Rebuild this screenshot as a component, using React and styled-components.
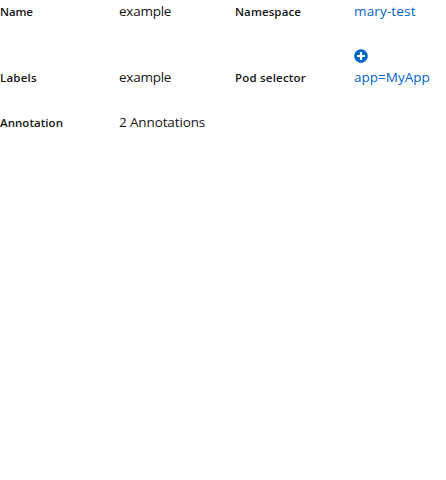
import React from "react";
import styled, { createGlobalStyle } from "styled-components";
import { FaPlusCircle } from "react-icons/fa";

const GlobalStyle = createGlobalStyle`
  body {
    margin: 0;
    background: #fff;
    color: #151515;
    font-family: "Open Sans", "Noto Sans", sans-serif;
    font-size: 14px;
    line-height: 21px;
  }
`;

const DescriptionList = styled.dl`
  display: grid;
  grid-template-columns: 211px 211px;
  gap: 24px;
  margin: 0;
  padding-top: 1px;
`;

const Group = styled.div`
  display: grid;
  grid-template-columns: 95px auto;
  column-gap: 24px;
  align-items: end;
`;

const Term = styled.dt`
  font-size: 11.5px;
  font-weight: 600;
  line-height: 20px;
  white-space: nowrap;
  letter-spacing: ${(p) => p.$tracking || 0}px;
`;

const Description = styled.dd`
  margin: 0;
  font-size: 13.5px;
  white-space: nowrap;
  letter-spacing: ${(p) => p.$tracking || 0}px;
`;

const Link = styled.a`
  color: #06c;
  text-decoration: none;
`;

const PlusIcon = styled(FaPlusCircle)`
  display: block;
  width: 14px;
  height: 14px;
  margin: 3px 0 4px;
`;

export default function App() {
  return (
    <>
      <GlobalStyle />
      <DescriptionList>
        <Group>
          <Term $tracking={-0.1}>Name</Term>
          <Description $tracking={-0.25}>example</Description>
        </Group>
        <Group>
          <Term $tracking={0.1}>Namespace</Term>
          <Description $tracking={0.15}><Link href="#">mary-test</Link></Description>
        </Group>
        <Group>
          <Term $tracking={0.2}>Labels</Term>
          <Description $tracking={-0.25}>example</Description>
        </Group>
        <Group>
          <Term $tracking={0.2}>Pod selector</Term>
          <Description>
            <Link href="#"><PlusIcon />app=MyApp</Link>
          </Description>
        </Group>
        <Group>
          <Term $tracking={0.05}>Annotation</Term>
          <Description $tracking={-0.13}>2 Annotations</Description>
        </Group>
      </DescriptionList>
    </>
  );
}
